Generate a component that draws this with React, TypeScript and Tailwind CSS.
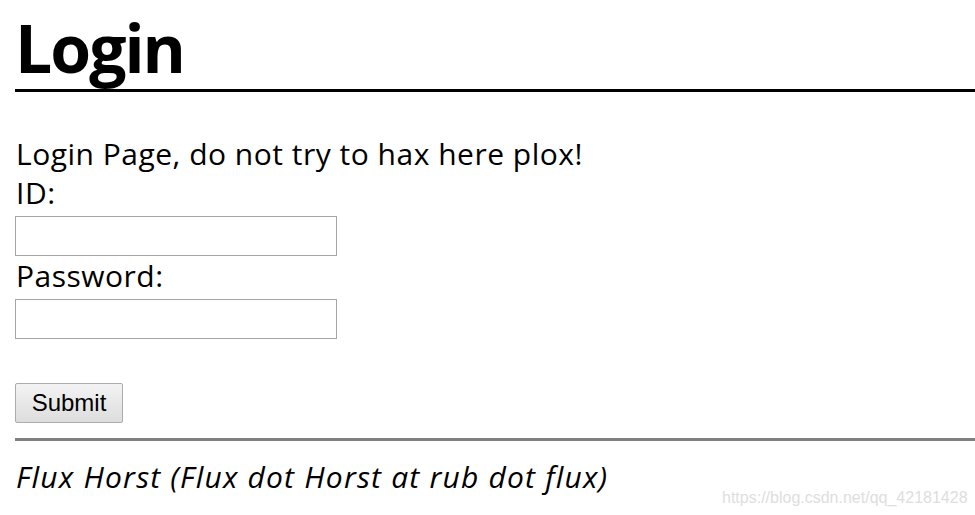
export default function App() {
  return (
    <div className="relative w-[975px] h-[515px] bg-white overflow-hidden font-['Open_Sans',sans-serif] text-black">
      <div className="pl-[15px]">
        <h1 className="mt-[6px] text-[66px] font-bold leading-[83px] tracking-[-2px] border-b-[3px] border-black">Login</h1>
        <p className="mt-[42px] text-[30px] leading-[39px] tracking-[0.5px] pl-[1px]">Login Page, do not try to hax here plox!</p>
        <div className="text-[30px] leading-[39px] tracking-[0.5px] pl-[1px]">ID:</div>
        <input type="text" className="mt-[4px] block w-[322px] h-[40px] border border-[#a5a5a5] bg-white outline-none" />
        <div className="text-[30px] leading-[39px] tracking-[0.5px] pl-[1px]">Password:</div>
        <input type="password" className="mt-[4px] block w-[322px] h-[40px] border border-[#a5a5a5] bg-white outline-none" />
        <button className="mt-[44px] block w-[108px] h-[40px] border border-[#acacac] rounded-[2px] bg-gradient-to-b from-[#f3f3f3] to-[#dddddd] font-['Liberation_Sans',Arial,sans-serif] text-[24px] leading-[28px] text-black">Submit</button>
        <div className="mt-[15px] h-[3px] bg-[#808080]"></div>
        <p className="mt-[16px] text-[30px] leading-[39px] italic tracking-[1.2px] pl-[1px]">Flux Horst (Flux dot Horst at rub dot flux)</p>
      </div>
      <div className="absolute left-[722px] top-[489px] font-['Liberation_Sans',Arial,sans-serif] text-[16px] leading-[18px] text-[#dedede]">https://blog.csdn.net/qq_42181428</div>
    </div>
  );
}
